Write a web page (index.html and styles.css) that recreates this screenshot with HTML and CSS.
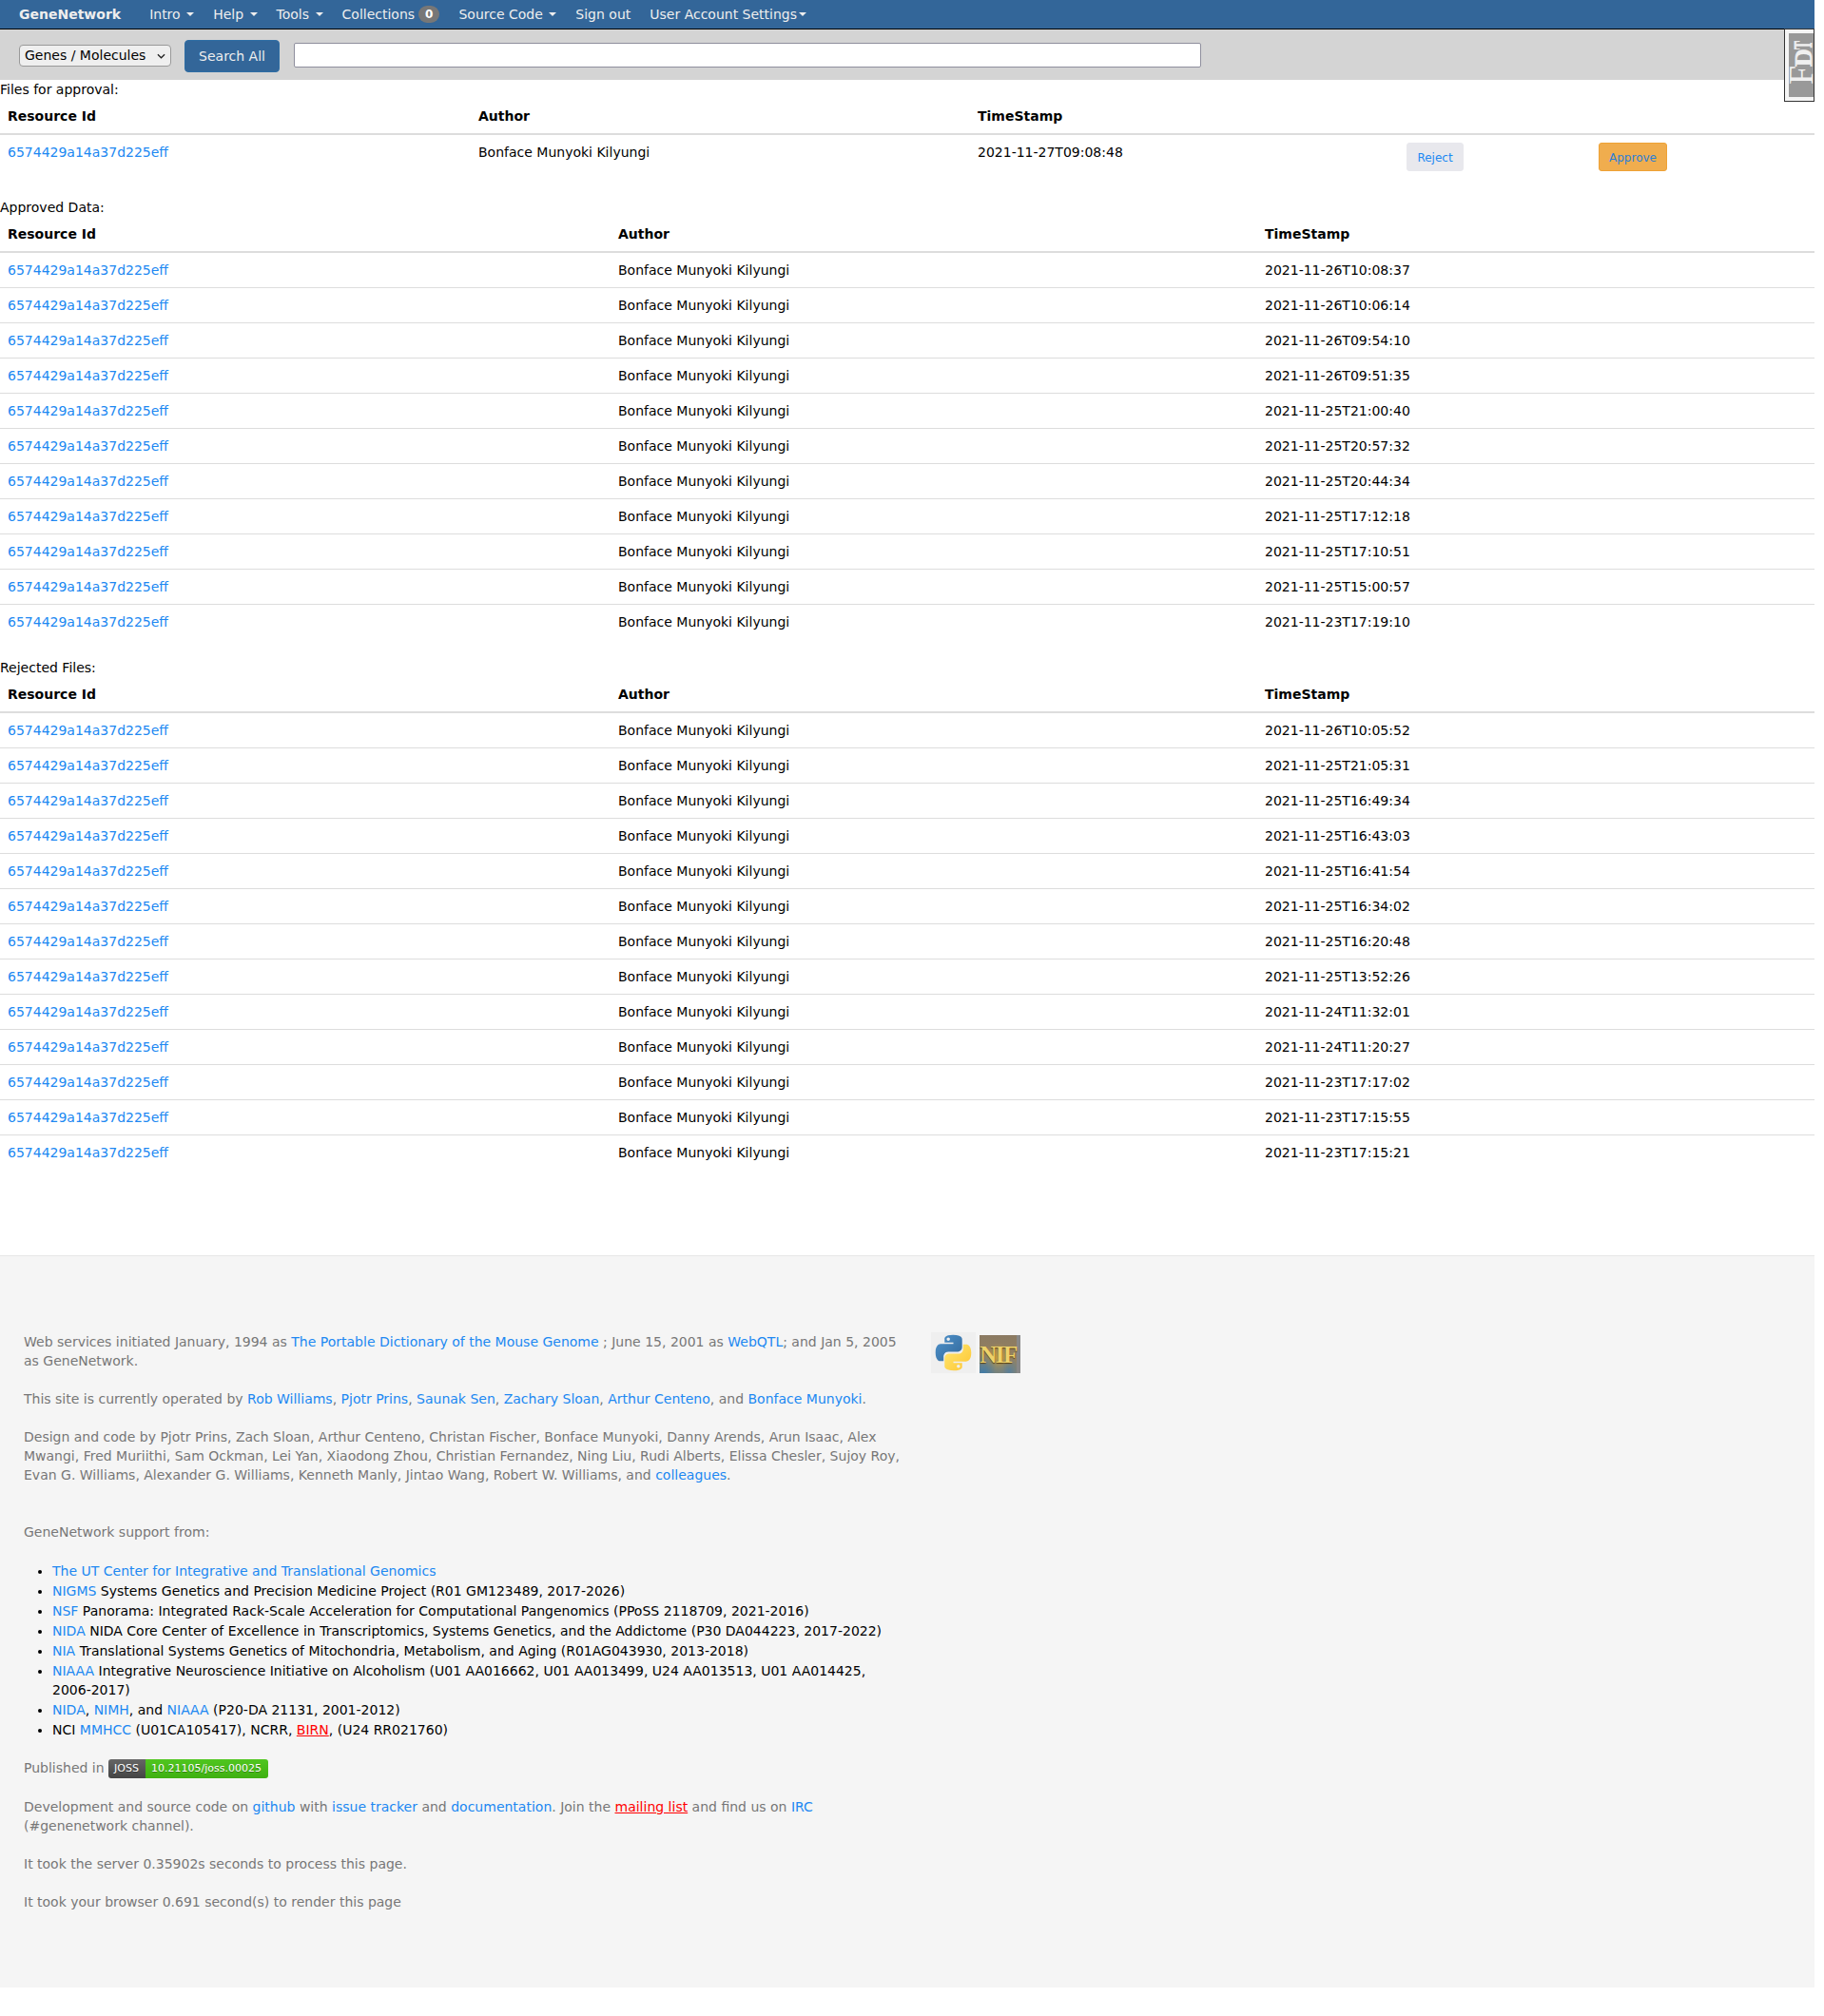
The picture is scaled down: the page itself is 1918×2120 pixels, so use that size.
FILE: index.html
```html
<!DOCTYPE html>
<html lang="en">
<head>
<meta charset="utf-8">
<title>GeneNetwork</title>
<link rel="stylesheet" href="styles.css">
</head>
<body>
<div class="page">
<nav class="navbar">
  <a class="brand">GeneNetwork</a>
  <a class="nav-item">Intro <span class="caret"></span></a>
  <a class="nav-item">Help <span class="caret"></span></a>
  <a class="nav-item">Tools <span class="caret"></span></a>
  <a class="nav-item">Collections <span class="badge">0</span></a>
  <a class="nav-item">Source Code <span class="caret"></span></a>
  <a class="nav-item">Sign out</a>
  <a class="nav-item">User Account Settings<span class="caret tight"></span></a>
</nav>
<div class="searchbar">
  <div class="kind-wrap">
    <select class="kind"><option>Genes / Molecules</option></select>
    <svg class="chevron" viewBox="0 0 10 6" aria-hidden="true"><polyline points="1,1 5,5 9,1" fill="none" stroke="#222" stroke-width="1.4"/></svg>
  </div>
  <button class="search-btn">Search All</button>
  <input class="search-input" type="text">
</div>
<div class="fdt"><span class="fdt-inner"><span class="fdt-text"><span class="fdt-f">F</span><span class="fdt-d">D</span><span class="fdt-t">T</span></span></span></div>

<p class="label first">Files for approval:</p>
<table class="tbl three">
  <colgroup><col class="a1"><col class="a2"><col class="a3"><col class="a4"><col class="a5"></colgroup>
  <thead><tr><th>Resource Id</th><th>Author</th><th>TimeStamp</th><th></th><th></th></tr></thead>
  <tbody><tr class="action-row"><td><a class="lnk">6574429a14a37d225eff</a></td><td>Bonface Munyoki Kilyungi</td><td>2021-11-27T09:08:48</td><td><button class="btn reject">Reject</button></td><td><button class="btn approve">Approve</button></td></tr></tbody>
</table>

<p class="label second">Approved Data:</p>
<table class="tbl">
  <colgroup><col class="b1"><col class="b2"><col class="b3"></colgroup>
  <thead><tr><th>Resource Id</th><th>Author</th><th>TimeStamp</th></tr></thead>
  <tbody>
  <tr><td><a class="lnk">6574429a14a37d225eff</a></td><td>Bonface Munyoki Kilyungi</td><td>2021-11-26T10:08:37</td></tr>
  <tr><td><a class="lnk">6574429a14a37d225eff</a></td><td>Bonface Munyoki Kilyungi</td><td>2021-11-26T10:06:14</td></tr>
  <tr><td><a class="lnk">6574429a14a37d225eff</a></td><td>Bonface Munyoki Kilyungi</td><td>2021-11-26T09:54:10</td></tr>
  <tr><td><a class="lnk">6574429a14a37d225eff</a></td><td>Bonface Munyoki Kilyungi</td><td>2021-11-26T09:51:35</td></tr>
  <tr><td><a class="lnk">6574429a14a37d225eff</a></td><td>Bonface Munyoki Kilyungi</td><td>2021-11-25T21:00:40</td></tr>
  <tr><td><a class="lnk">6574429a14a37d225eff</a></td><td>Bonface Munyoki Kilyungi</td><td>2021-11-25T20:57:32</td></tr>
  <tr><td><a class="lnk">6574429a14a37d225eff</a></td><td>Bonface Munyoki Kilyungi</td><td>2021-11-25T20:44:34</td></tr>
  <tr><td><a class="lnk">6574429a14a37d225eff</a></td><td>Bonface Munyoki Kilyungi</td><td>2021-11-25T17:12:18</td></tr>
  <tr><td><a class="lnk">6574429a14a37d225eff</a></td><td>Bonface Munyoki Kilyungi</td><td>2021-11-25T17:10:51</td></tr>
  <tr><td><a class="lnk">6574429a14a37d225eff</a></td><td>Bonface Munyoki Kilyungi</td><td>2021-11-25T15:00:57</td></tr>
  <tr><td><a class="lnk">6574429a14a37d225eff</a></td><td>Bonface Munyoki Kilyungi</td><td>2021-11-23T17:19:10</td></tr>
  </tbody>
</table>

<p class="label third">Rejected Files:</p>
<table class="tbl">
  <colgroup><col class="b1"><col class="b2"><col class="b3"></colgroup>
  <thead><tr><th>Resource Id</th><th>Author</th><th>TimeStamp</th></tr></thead>
  <tbody>
  <tr><td><a class="lnk">6574429a14a37d225eff</a></td><td>Bonface Munyoki Kilyungi</td><td>2021-11-26T10:05:52</td></tr>
  <tr><td><a class="lnk">6574429a14a37d225eff</a></td><td>Bonface Munyoki Kilyungi</td><td>2021-11-25T21:05:31</td></tr>
  <tr><td><a class="lnk">6574429a14a37d225eff</a></td><td>Bonface Munyoki Kilyungi</td><td>2021-11-25T16:49:34</td></tr>
  <tr><td><a class="lnk">6574429a14a37d225eff</a></td><td>Bonface Munyoki Kilyungi</td><td>2021-11-25T16:43:03</td></tr>
  <tr><td><a class="lnk">6574429a14a37d225eff</a></td><td>Bonface Munyoki Kilyungi</td><td>2021-11-25T16:41:54</td></tr>
  <tr><td><a class="lnk">6574429a14a37d225eff</a></td><td>Bonface Munyoki Kilyungi</td><td>2021-11-25T16:34:02</td></tr>
  <tr><td><a class="lnk">6574429a14a37d225eff</a></td><td>Bonface Munyoki Kilyungi</td><td>2021-11-25T16:20:48</td></tr>
  <tr><td><a class="lnk">6574429a14a37d225eff</a></td><td>Bonface Munyoki Kilyungi</td><td>2021-11-25T13:52:26</td></tr>
  <tr><td><a class="lnk">6574429a14a37d225eff</a></td><td>Bonface Munyoki Kilyungi</td><td>2021-11-24T11:32:01</td></tr>
  <tr><td><a class="lnk">6574429a14a37d225eff</a></td><td>Bonface Munyoki Kilyungi</td><td>2021-11-24T11:20:27</td></tr>
  <tr><td><a class="lnk">6574429a14a37d225eff</a></td><td>Bonface Munyoki Kilyungi</td><td>2021-11-23T17:17:02</td></tr>
  <tr><td><a class="lnk">6574429a14a37d225eff</a></td><td>Bonface Munyoki Kilyungi</td><td>2021-11-23T17:15:55</td></tr>
  <tr><td><a class="lnk">6574429a14a37d225eff</a></td><td>Bonface Munyoki Kilyungi</td><td>2021-11-23T17:15:21</td></tr>
  </tbody>
</table>

<footer class="footer">
  <div class="foot-text">
    <p class="fp">Web services initiated January, 1994 as <a class="lnk">The Portable Dictionary of the Mouse Genome</a> ; June 15, 2001 as <a class="lnk">WebQTL</a>; and Jan 5, 2005 as GeneNetwork.</p>
    <p class="fp">This site is currently operated by <a class="lnk">Rob Williams</a>, <a class="lnk">Pjotr Prins</a>, <a class="lnk">Saunak Sen</a>, <a class="lnk">Zachary Sloan</a>, <a class="lnk">Arthur Centeno</a>, and <a class="lnk">Bonface Munyoki</a>.</p>
    <p class="fp">Design and code by Pjotr Prins, Zach Sloan, Arthur Centeno, Christan Fischer, Bonface Munyoki, Danny Arends, Arun Isaac, Alex Mwangi, Fred Muriithi, Sam Ockman, Lei Yan, Xiaodong Zhou, Christian Fernandez, Ning Liu, Rudi Alberts, Elissa Chesler, Sujoy Roy, Evan G. Williams, Alexander G. Williams, Kenneth Manly, Jintao Wang, Robert W. Williams, and <a class="lnk">colleagues</a>.</p>
    <p class="fp support">GeneNetwork support from:</p>
    <ul class="support-list">
      <li><a class="lnk">The UT Center for Integrative and Translational Genomics</a></li>
      <li><a class="lnk">NIGMS</a> Systems Genetics and Precision Medicine Project (R01 GM123489, 2017-2026)</li>
      <li><a class="lnk">NSF</a> Panorama: Integrated Rack-Scale Acceleration for Computational Pangenomics (PPoSS 2118709, 2021-2016)</li>
      <li><a class="lnk">NIDA</a> NIDA Core Center of Excellence in Transcriptomics, Systems Genetics, and the Addictome (P30 DA044223, 2017-2022)</li>
      <li><a class="lnk">NIA</a> Translational Systems Genetics of Mitochondria, Metabolism, and Aging (R01AG043930, 2013-2018)</li>
      <li><a class="lnk">NIAAA</a> Integrative Neuroscience Initiative on Alcoholism (U01 AA016662, U01 AA013499, U24 AA013513, U01 AA014425, 2006-2017)</li>
      <li><a class="lnk">NIDA</a>, <a class="lnk">NIMH</a>, and <a class="lnk">NIAAA</a> (P20-DA 21131, 2001-2012)</li>
      <li>NCI <a class="lnk">MMHCC</a> (U01CA105417), NCRR, <a class="red">BIRN</a>, (U24 RR021760)</li>
    </ul>
    <p class="fp">Published in <span class="joss"><span class="joss-l">JOSS</span><span class="joss-r">10.21105/joss.00025</span></span></p>
    <p class="fp">Development and source code on <a class="lnk">github</a> with <a class="lnk">issue tracker</a> and <a class="lnk">documentation</a>. Join the <a class="red">mailing list</a> and find us on <a class="lnk">IRC</a> (#genenetwork channel).</p>
    <p class="fp">It took the server 0.35902s seconds to process this page.</p>
    <p class="fp">It took your browser 0.691 second(s) to render this page</p>
  </div>
  <div class="foot-logos">
    <span class="python-box">
      <svg class="python" viewBox="0 0 110 110" aria-label="Python logo">
        <defs>
          <linearGradient id="pyb" x1="0" y1="0" x2="1" y2="1"><stop offset="0" stop-color="#4f93cc"/><stop offset="1" stop-color="#32689a"/></linearGradient>
          <linearGradient id="pyy" x1="0" y1="0" x2="1" y2="1"><stop offset="0" stop-color="#ffe873"/><stop offset="1" stop-color="#fdc531"/></linearGradient>
        </defs>
        <path fill="url(#pyb)" d="M54 2C28 2 29 13 29 13v12h26v4H19S2 27 2 54s15 26 15 26h9V67s-1-15 15-15h26s14 0 14-14V15S83 2 54 2zM40 10a5 5 0 1 1 0 10 5 5 0 0 1 0-10z"/>
        <path fill="url(#pyy)" d="M56 108c26 0 25-11 25-11V85H55v-4h36s17 2 17-25-15-26-15-26h-9v13s1 15-15 15H43s-14 0-14 14v23s-2 13 27 13zm14-8a5 5 0 1 1 0-10 5 5 0 0 1 0 10z"/>
      </svg>
    </span>
    <span class="nif"><span class="nif-text">NIF</span></span>
  </div>
</footer>
</div>
</body>
</html>
```
FILE: styles.css
```css
* { box-sizing: border-box; }
html, body { margin: 0; padding: 0; background: #fff; }
body { font-family: "DejaVu Sans", sans-serif; font-size: 14px; line-height: 20px; color: #000; }
.page { width: 1908px; position: relative; }
.navbar { height: 31px; background: #336699; border-bottom: 1px solid #000; display: flex; align-items: center; color: #f0f0f0; padding-left: 20px; }
.brand { font-weight: bold; color: #eee; margin-right: 30px; }
.nav-item { margin-right: 20px; color: #eee; white-space: nowrap; display: flex; align-items: center; gap: 4px; }
.caret { display: inline-block; width: 0; height: 0; border-top: 4px solid #eee; border-left: 4px solid transparent; border-right: 4px solid transparent; margin-left: 2.5px; }
.caret.tight { margin-left: -2px; }
.badge { background: #777; color: #fff; border-radius: 10px; font-size: 12px; font-weight: bold; line-height: 12px; padding: 3px 7px; }
.searchbar { height: 53px; background: #d4d4d4; display: flex; align-items: flex-start; padding-left: 20px; }
.kind-wrap { position: relative; width: 160px; height: 23px; margin-top: 16px; }
.kind { appearance: none; width: 160px; height: 23px; display: block; font: 14px "DejaVu Sans", sans-serif; background: #efefef; border: 1px solid #999; border-radius: 4px; padding: 0 0 2px 5px; color: #000; }
.chevron { position: absolute; right: 6px; top: 9px; width: 9px; height: 6px; }
.search-btn { width: 100px; height: 34px; margin-top: 11px; margin-left: 14px; background: #336699; color: #eee; border: 1px solid #2e6da4; border-radius: 4px; font: 14px "DejaVu Sans", sans-serif; padding: 0; }
.search-input { width: 954px; height: 26px; margin-top: 14px; margin-left: 15px; background: #fff; border: 1px solid #8f8f9d; border-radius: 2px; }
.fdt { position: absolute; top: 30px; right: 0; width: 32px; height: 77px; background: #f5f5f5; border: 1px solid #333; padding: 4px 0 4px 4px; }
.fdt-inner { display: block; height: 67px; background: #999; position: relative; }
.fdt-text { position: absolute; left: -2px; top: 54px; display: inline-flex; align-items: baseline; transform-origin: 0 0; transform: rotate(-90deg); color: #f0f0f0; line-height: 30px; white-space: nowrap; font-family: "Liberation Serif", serif; }
.fdt-f { font-size: 36px; margin-right: -1px; }
.fdt-d { font-size: 26px; font-weight: bold; position: relative; top: -1.5px; -webkit-text-stroke: 0.7px #f0f0f0; }
.fdt-t { font-size: 27px; font-weight: bold; display: inline-block; width: 9px; margin-left: -1px; position: relative; top: -1.5px; -webkit-text-stroke: 0.7px #f0f0f0; transform-origin: 0 100%; transform: scaleX(0.5); }
.label { margin: 0; height: 20px; }
.label.second { margin-top: 20px; }
.label.third { margin-top: 19px; }
.tbl { width: 1908px; border-collapse: collapse; table-layout: fixed; }
.tbl th { text-align: left; font-weight: bold; padding: 8px; height: 37px; border-bottom: 2px solid #ddd; }
.tbl td { padding: 8px; height: 37px; border-top: 1px solid #ddd; vertical-align: top; line-height: 20px; }
.tbl tbody tr:first-child td { border-top: 0; }
.action-row td { height: 46px; }
.a1 { width: 495px; } .a2 { width: 525px; } .a3 { width: 451px; } .a4 { width: 202px; } .a5 { width: 235px; }
.b1 { width: 642px; } .b2 { width: 680px; } .b3 { width: 586px; }
.lnk { color: #2088f2; }
.red { color: #f00; text-decoration: underline; }
.btn { font: 12px "DejaVu Sans", sans-serif; height: 30px; border-radius: 3px; padding: 1px 10px 0; color: #2088f2; cursor: pointer; }
.reject { width: 60px; background: #e8e8ed; border: 1px solid #e8e8ed; }
.approve { width: 72px; background: #f0ad4e; border: 1px solid #eea236; color: #2a7fd8; }
.footer { margin-top: 90px; background: #f5f5f5; border-top: 1px solid #e7e7e7; height: 770px; display: flex; padding: 80px 0 0 25px; color: #777; }
.foot-text { width: 930px; }
.fp { margin: 0 0 20px; }
.fp.support { margin-top: 40px; margin-bottom: 21px; }
.support-list { margin: 0 0 19px; padding-left: 30px; color: #000; }
.support-list li { line-height: 20.9px; }
.foot-logos { display: flex; align-items: flex-start; margin-left: 24px; gap: 4px; }
.python-box { width: 47px; height: 43px; background: #efefef; display: flex; justify-content: center; align-items: center; }
.python { width: 39px; height: 39px; }
.nif { width: 43px; height: 40px; margin-top: 3px; background: radial-gradient(circle at 10% 100%, #3f7ba8, rgba(63,123,168,0) 40%), radial-gradient(circle at 80% 95%, #5a7f98, rgba(90,127,152,0) 30%), radial-gradient(circle at 50% 60%, #c79f3f, rgba(199,159,63,0) 50%), linear-gradient(180deg, #8b7a62, #9a8660); border-right: 4px solid #888; display: flex; align-items: center; justify-content: center; }
.nif-text { font: bold 25px/25px "Liberation Serif", serif; letter-spacing: -1.5px; color: #eed26a; text-shadow: 0 1px 1px #5a3f10; }
.joss { display: inline-flex; vertical-align: middle; height: 20px; border-radius: 3px; overflow: hidden; font-size: 11px; line-height: 20px; color: #fff; text-shadow: 0 1px 0 rgba(1,1,1,.3); }
.joss-l { background: linear-gradient(#666, #444); padding: 0 6px; width: 39px; }
.joss-r { background: linear-gradient(#50c61f, #3fb012); padding: 0 6px; width: 129px; }
```
